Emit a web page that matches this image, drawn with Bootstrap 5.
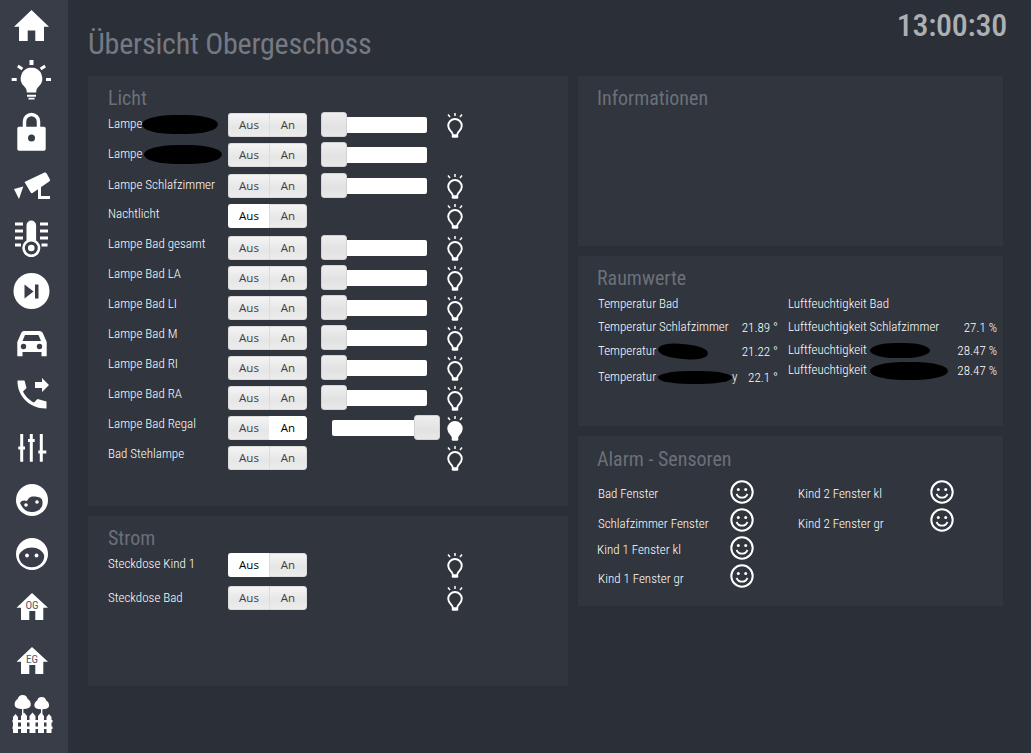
<!doctype html>
<html lang="de"><head><meta charset="utf-8">
<title>Übersicht Obergeschoss</title>
<link href="https://cdn.jsdelivr.net/npm/bootstrap@5.3.0/dist/css/bootstrap.min.css" rel="stylesheet">
<style>
html,body{height:100%}
body{background:#2b2f38;color:#fff;font-family:Roboto,"Liberation Sans",sans-serif;font-size:13px;font-weight:300;font-stretch:75%;overflow:hidden}
.side{width:68px;height:753px;background:#383d48;flex:none}
.side svg{display:block;width:68px;height:53px;fill:#fff;flex:none}
.hole{fill:#383d48}
.page{width:963px;position:relative}
.ptitle{font-size:30px;font-weight:400;letter-spacing:-.23px;color:#757a82;line-height:36px;margin:26px 0 14px 20px}
.clock{position:absolute;top:6px;right:24px;font-size:32px;font-weight:500;letter-spacing:-.25px;color:#aeafb2;line-height:38px}
.board{display:grid;grid-template-columns:480px 425px;column-gap:10px;margin-left:20px;align-items:start}
.pane{background:#30353e;border:0;border-radius:0;color:inherit;padding:10px 20px 0;margin-bottom:10px}
.ph{font-size:20px;font-weight:400;color:#6b7078;line-height:24px;margin:0 0 3px}
.rightc .ph{margin-left:-1px}
.licht{height:430px}.strom{height:170px}.info,.raum,.alarm{height:170px}
.rw{display:flex;height:30px}
.rw.h31{height:31px}.rw.h32{height:32px}.rw.h33{height:33px}
.lb{width:120px;line-height:16px;padding-top:2px;flex:none;white-space:nowrap}
.lb.a{padding-top:3px}.lb.b{padding-top:2px}.lb.c{padding-top:0}.lb.d{padding-top:4px}
.tg{width:79px;height:24px;flex:none;margin-right:14px;align-self:flex-start}
.tg .btn{font-family:"Open Sans",Roboto,sans-serif;font-size:11.5px;font-weight:400;font-stretch:100%;line-height:22px;padding:0;color:#3f3f3f;background:linear-gradient(#f4f4f4,#e6e6e6 60%,#ececec);border:1px solid #dcdcdc;border-radius:3px;flex:none}
.tg .btn:first-child{width:42px;border-right:1px solid #c4c4c4;border-top-right-radius:0;border-bottom-right-radius:0}
.tg .btn:last-child{width:38px;margin-left:-1px;border-top-left-radius:0;border-bottom-left-radius:0}
.tg .btn.sel{background:#fff;border-color:#fff;color:#000}
.tg .btn:first-child.sel{border-right-color:#c4c4c4}
.sl{width:106px;height:16px;background:#fff;border-radius:2px;position:relative;margin-top:4px;flex:none;align-self:flex-start}
.sl i{position:absolute;left:0;top:-5px;width:26px;height:25px;background:linear-gradient(#eeeeee,#e2e2e2 60%,#e8e8e8);border:1px solid #d2d2d2;border-radius:3px}
.sl.rt{margin-left:11px;width:95px}
.sl.rt i{left:auto;right:-13px}
.nosl{width:106px;flex:none}
.bb{width:22px;height:26px;margin:-1px 0 0 17px;flex:none;fill:none;stroke:#fff;stroke-width:1.9}
.bb.lit{fill:#fff}
.blob{display:inline-block;background:#000;border-radius:42%/50%;vertical-align:middle;margin-top:-8px;margin-bottom:-8px}
.b1{width:76px;height:19px}.b2{width:78px;height:19px;margin-left:2px}
.b3{width:50px;height:15px;margin-left:2px;transform:rotate(5deg)}
.b4{width:74px;height:13px;margin-left:2px}
.b5{width:60px;height:15px;margin-left:3px}.b6{width:78px;height:18px;margin-left:3px}
.vals{display:grid;grid-template-columns:190px 209px;margin-top:3px}
.vrow{display:flex;justify-content:space-between;white-space:nowrap;line-height:16px;height:23px}
.vals>div:first-child .vrow{padding-right:10px}
.vrow.r24{height:24px}.vrow.r26{height:26px}.vrow.r20{height:20px}
.vrow span:last-child:not(:first-child){padding-top:1px}
.alarm{padding-top:11px}
.alarms{display:grid;grid-template-columns:200px 180px;margin-top:6px}
.ar{display:flex;height:28px;line-height:16px;white-space:nowrap}
.ar span{width:132px;padding-top:6px;flex:none}
.ar span.p6{padding-top:7px}.ar span.p7{padding-top:8px}.ar span.nudge{margin-left:-1px;margin-right:1px}
.sm{width:24px;height:24px;fill:none;stroke:#fff;stroke-width:2;flex:none}
</style></head>
<body class="d-flex">
<svg width="0" height="0" class="position-absolute">
<symbol id="bulb" viewBox="0 0 22 26"><path d="M11 1v3M4 2.500l2 2.400M18 2.500l-2 2.400" stroke-width="1.500"/><path d="M7.800 20.300C6.100 18.300 4.200 16.800 4.200 13.800a6.800 6.800 0 0 1 13.600 0c0 3-1.900 4.500-3.600 6.500-.8 1-1 2-1 2.900H8.800c0-.9-.2-1.900-1-2.900Z"/><path d="M9 24.500h4" stroke-width="2.600" stroke-linecap="round"/></symbol>
<symbol id="smile" viewBox="0 0 24 24"><circle cx="12" cy="12" r="10.700"/><circle cx="8.300" cy="9.500" r="1.500" fill="#fff" stroke="none"/><circle cx="15.700" cy="9.500" r="1.500" fill="#fff" stroke="none"/><path d="M6.500 14c1.200 2.600 3.200 3.700 5.500 3.700s4.300-1.100 5.500-3.700" stroke-width="1.800"/></symbol>
</svg>
<nav class="side d-flex flex-column">
<svg viewBox="0 0 68 53"><path d="M31.500 10 49 26.700H44V41H35.300V30.500H27.700V41H19V26.700H14Z"/></svg>
<svg viewBox="0 53 68 53"><path d="M31.500 67.500a11 11 0 0 0-7 19.300c1.700 1.500 2.300 3.300 2.300 5.700h9.400c0-2.400.6-4.200 2.300-5.700a11 11 0 0 0-7-19.300ZM27 94.800h9v1.900h-9ZM28.500 97.800h6v1.800h-6ZM29.500 60h4v5h-4ZM11.700 78h5v3h-5ZM46 78h5v3h-5ZM18.700 64.800l4.500 3-1.700 2.400-4.500-3ZM44.300 64.800l-4.500 3 1.700 2.400 4.500-3Z"/></svg>
<svg viewBox="0 106 68 53"><path d="M19 126.700h25a1.700 1.700 0 0 1 1.700 1.700V149a1.700 1.700 0 0 1-1.700 1.700H19a1.700 1.700 0 0 1-1.700-1.700v-20.600a1.700 1.700 0 0 1 1.700-1.700Z"/><path d="M24.500 127v-5.500a7 7 0 0 1 14 0v5.500" fill="none" stroke="#fff" stroke-width="3.500"/><circle class="hole" cx="31.500" cy="138" r="3.500"/></svg>
<svg viewBox="0 159 68 53"><path d="M24.500 182 44.500 172.500c1 0 1.800.5 2.300 1.300l3 5.500c.4.900.2 1.700-.6 2.300L32.500 193c-.7.400-1.300.2-1.800-.4ZM14 189l9.300-2.500L19 199Z"/><path d="M39.500 187v10.500H50" fill="none" stroke="#fff" stroke-width="3"/></svg>
<svg viewBox="0 212 68 53"><path d="M31.300 220.500a4.800 4.800 0 0 1 4.800 4.800v15.200a9 9 0 1 1-9.600 0v-15.200a4.800 4.800 0 0 1 4.800-4.800Z"/><circle class="hole" cx="31.300" cy="248" r="6.500"/><circle cx="31.300" cy="248" r="3.300"/><path d="M15 222.500h8v3h-8ZM15 229.500h8v3h-8ZM15 236.500h8v3h-8ZM15 243.500h6v3h-6ZM40 222.500h8v3h-8ZM40 229.500h8v3h-8ZM40 236.500h8v3h-8ZM41.500 243.500h6v3h-6Z"/></svg>
<svg viewBox="0 265 68 53"><circle cx="31.500" cy="291" r="18"/><path class="hole" d="M24.500 284.500 33.500 291.500 24.500 298.500ZM35 284.500h3.500v14H35Z"/></svg>
<svg viewBox="0 318 68 53"><path d="M24 331h15.500c1.500 0 2.900.9 3.500 2.400l3.700 8.600v14.300h-5.200V352H22.500v4.300h-5.200V342l3.700-8.600c.6-1.500 1.500-2.400 3-2.400Z"/><path class="hole" d="M25 335h13.500l2.500 6H22.500Z"/><circle class="hole" cx="23.500" cy="346.500" r="2.700"/><circle class="hole" cx="39.500" cy="346.500" r="2.700"/></svg>
<svg viewBox="0 371 68 53"><path d="M35 382h7v-4l7 7-7 7v-4h-7ZM17.500 380.500H24.500L26.500 388 23 391.500c2 4.500 6.500 9 11 11l3.500-3.500 9 2.500v7C30 409 17 396 17.500 380.500Z"/></svg>
<svg viewBox="0 424 68 53"><path d="M20.200 434h3v27.700h-3ZM29.800 434h3v27.700h-3ZM39.800 434h3v27.700h-3ZM18.300 446.500h6.700v3h-6.700ZM28 439h6.700v3H28ZM38.300 450.500h8v3h-8Z"/></svg>
<svg viewBox="0 477 68 53"><circle cx="32" cy="500" r="16"/><path class="hole" d="M20 503c1-3 5-3 7-2 1-2 2-4 5-4.500 4-.5 9 .5 10 3 1.500 5 0 9-4 11-5 2.500-11 2-14-1.500-2-2-3-4-4-6Z"/><circle cx="37" cy="502" r="1.800"/><circle cx="26" cy="505" r="1.800"/></svg>
<svg viewBox="0 530 68 53"><circle cx="32" cy="554" r="16"/><path class="hole" d="M18.900 555.500c1.500-4.500 7-8 12.800-8s11.300 3.500 12.500 8c.3 6.800-5.500 11.800-12.500 11.800s-13-5-12.800-11.800Z"/><circle cx="27" cy="555.500" r="1.900"/><circle cx="36.500" cy="555.500" r="1.900"/></svg>
<svg viewBox="0 583 68 53"><path d="M32 593 48 607.700H43.300V620H35.300V611H29.300V620H21V607.700H16.500Z"/><text x="32" y="609" text-anchor="middle" font-size="11" font-weight="400" fill="#555a64">OG</text></svg>
<svg viewBox="0 636 68 53"><path d="M32 647 48 661.700H43.300V674H35.300V665H29.300V674H21V661.700H16.500Z"/><text x="32" y="663" text-anchor="middle" font-size="11" font-weight="400" fill="#555a64">EG</text></svg>
<svg viewBox="0 689 68 53"><path d="M22.700 695c3 0 4.500 2 5 4 2 1 3.500 3.500 3 6.500-.4 2.300-3 3.500-7.300 3.500h-1.400c-4.300 0-6.900-1.200-7.300-3.500-.5-3 1-5.500 3-6.500.5-2 2-4 5-4ZM22 708h1.400v8H22Z"/><path d="M41.700 697c2.800 0 4 1.800 4.500 3.600 1.900.9 3.200 3 2.800 5.600-.4 2-2.800 3-6.600 3h-1.400c-3.800 0-6.200-1-6.600-3-.4-2.600.9-4.700 2.800-5.600.5-1.800 1.700-3.600 4.500-3.600ZM41 708h1.400v8H41Z"/><path d="M12.500 720h40v2.500h-40ZM12.500 726.500h40v2.500h-40ZM13 717l2.500-3 2.500 3v16h-5ZM21 716l3-3.500 3 3.500v17h-6ZM29.500 716l3-3.500 3 3.500v17h-6ZM38 716l3-3.500 3 3.500v17h-6ZM46.500 717l2.500-3 2.500 3v16h-5Z"/></svg>
</nav>
<main class="page">
<div class="ptitle">Übersicht Obergeschoss</div><div class="clock">13:00:30</div>
<div class="board">
<div>
<section class="card pane licht">
<h2 class="ph">Licht</h2>
<div class="rw"><div class="lb a">Lampe<span class="blob b1"></span></div><div class="btn-group tg"><button class="btn">Aus</button><button class="btn">An</button></div><div class="sl"><i></i></div><svg class="bb"><use href="#bulb"/></svg></div>
<div class="rw h31"><div class="lb a">Lampe<span class="blob b2"></span></div><div class="btn-group tg"><button class="btn">Aus</button><button class="btn">An</button></div><div class="sl"><i></i></div></div>
<div class="rw"><div class="lb a">Lampe Schlafzimmer</div><div class="btn-group tg"><button class="btn">Aus</button><button class="btn">An</button></div><div class="sl"><i></i></div><svg class="bb"><use href="#bulb"/></svg></div>
<div class="rw h32"><div class="lb b">Nachtlicht</div><div class="btn-group tg"><button class="btn sel">Aus</button><button class="btn">An</button></div><div class="nosl"></div><svg class="bb"><use href="#bulb"/></svg></div>
<div class="rw"><div class="lb c">Lampe Bad gesamt</div><div class="btn-group tg"><button class="btn">Aus</button><button class="btn">An</button></div><div class="sl"><i></i></div><svg class="bb"><use href="#bulb"/></svg></div>
<div class="rw"><div class="lb c">Lampe Bad LA</div><div class="btn-group tg"><button class="btn">Aus</button><button class="btn">An</button></div><div class="sl"><i></i></div><svg class="bb"><use href="#bulb"/></svg></div>
<div class="rw"><div class="lb c">Lampe Bad LI</div><div class="btn-group tg"><button class="btn">Aus</button><button class="btn">An</button></div><div class="sl"><i></i></div><svg class="bb"><use href="#bulb"/></svg></div>
<div class="rw"><div class="lb c">Lampe Bad M</div><div class="btn-group tg"><button class="btn">Aus</button><button class="btn">An</button></div><div class="sl"><i></i></div><svg class="bb"><use href="#bulb"/></svg></div>
<div class="rw"><div class="lb c">Lampe Bad RI</div><div class="btn-group tg"><button class="btn">Aus</button><button class="btn">An</button></div><div class="sl"><i></i></div><svg class="bb"><use href="#bulb"/></svg></div>
<div class="rw"><div class="lb c">Lampe Bad RA</div><div class="btn-group tg"><button class="btn">Aus</button><button class="btn">An</button></div><div class="sl"><i></i></div><svg class="bb"><use href="#bulb"/></svg></div>
<div class="rw"><div class="lb c">Lampe Bad Regal</div><div class="btn-group tg"><button class="btn">Aus</button><button class="btn sel">An</button></div><div class="sl rt"><i></i></div><svg class="bb lit"><use href="#bulb"/></svg></div>
<div class="rw"><div class="lb c">Bad Stehlampe</div><div class="btn-group tg"><button class="btn">Aus</button><button class="btn">An</button></div><div class="nosl"></div><svg class="bb"><use href="#bulb"/></svg></div>
</section>
<section class="card pane strom">
<h2 class="ph">Strom</h2>
<div class="rw h33"><div class="lb a">Steckdose Kind 1</div><div class="btn-group tg"><button class="btn sel">Aus</button><button class="btn">An</button></div><div class="nosl"></div><svg class="bb"><use href="#bulb"/></svg></div>
<div class="rw"><div class="lb d">Steckdose Bad</div><div class="btn-group tg"><button class="btn">Aus</button><button class="btn">An</button></div><div class="nosl"></div><svg class="bb"><use href="#bulb"/></svg></div>
</section>
</div>
<div class="rightc">
<section class="card pane info"><h2 class="ph">Informationen</h2></section>
<section class="card pane raum">
<h2 class="ph">Raumwerte</h2>
<div class="vals">
<div>
<div class="vrow"><span>Temperatur Bad</span></div>
<div class="vrow r24"><span>Temperatur Schlafzimmer</span><span>21.89 °</span></div>
<div class="vrow r26"><span>Temperatur<span class="blob b3"></span></span><span>21.22 °</span></div>
<div class="vrow"><span>Temperatur<span class="blob b4"></span>y</span><span>22.1 °</span></div>
</div>
<div>
<div class="vrow"><span>Luftfeuchtigkeit Bad</span></div>
<div class="vrow"><span>Luftfeuchtigkeit Schlafzimmer</span><span>27.1 %</span></div>
<div class="vrow r20"><span>Luftfeuchtigkeit<span class="blob b5"></span></span><span>28.47 %</span></div>
<div class="vrow"><span>Luftfeuchtigkeit<span class="blob b6"></span></span><span>28.47 %</span></div>
</div>
</div>
</section>
<section class="card pane alarm">
<h2 class="ph">Alarm - Sensoren</h2>
<div class="alarms">
<div>
<div class="ar"><span>Bad Fenster</span><svg class="sm"><use href="#smile"/></svg></div>
<div class="ar"><span class="p7">Schlafzimmer Fenster</span><svg class="sm"><use href="#smile"/></svg></div>
<div class="ar"><span class="nudge">Kind 1 Fenster kl</span><svg class="sm"><use href="#smile"/></svg></div>
<div class="ar"><span class="p6">Kind 1 Fenster gr</span><svg class="sm"><use href="#smile"/></svg></div>
</div>
<div>
<div class="ar"><span>Kind 2 Fenster kl</span><svg class="sm"><use href="#smile"/></svg></div>
<div class="ar"><span class="p7">Kind 2 Fenster gr</span><svg class="sm"><use href="#smile"/></svg></div>
</div>
</div>
</section>
</div>
</div>
</main>
</body></html>
